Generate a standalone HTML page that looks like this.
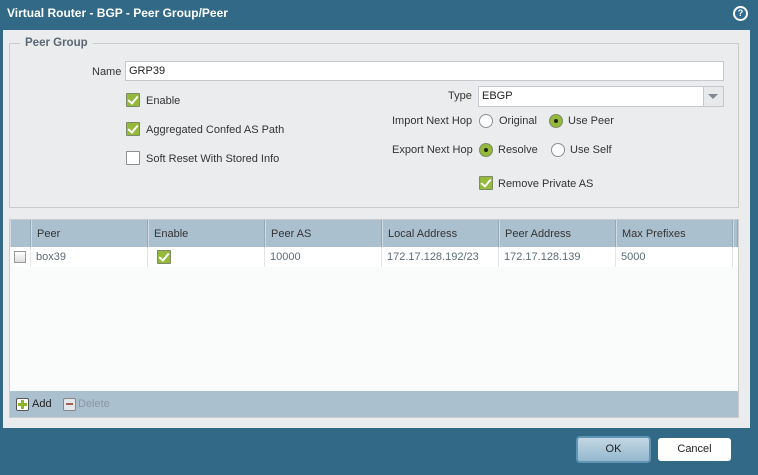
<!DOCTYPE html>
<html><head><meta charset="utf-8"><style>
*{box-sizing:border-box;margin:0;padding:0}
body{width:758px;height:475px;background:#316987;font-family:"Liberation Sans",Tahoma,sans-serif;font-size:11px;color:#333;position:relative;overflow:hidden}
.a{position:absolute}
.title{left:7px;top:6px;color:#fff;font-weight:bold;font-size:12px}
.help{left:733px;top:6px;width:15px;height:15px;border-radius:50%;background:#fff;border:2px solid #fff;}
.help div{width:11px;height:11px;border-radius:50%;background:#2f6d93;color:#fff;font-size:9px;font-weight:bold;text-align:center;line-height:11px}
.panel{left:3px;top:30px;width:747px;height:398px;background:#ebecee}
.fs{left:9px;top:43px;width:730px;height:165px;border:1px solid #c9cbcd}
.legend{left:20px;top:37px;background:#ebecee;padding:0 5px;color:#5b6773;font-weight:bold;font-size:11.5px}
.inp{background:#fff;border:1px solid #c5c8cc;padding-left:3px;line-height:18px;color:#222}
.cb{width:14px;height:14px;border:1px solid #8b8f94;background:#fff;border-radius:1px}
.cb.on{background:#95b93a;border-color:#7c8b66}
.cb.on::after{content:"";position:absolute;left:3px;top:0px;width:4px;height:8px;border:solid #fff;border-width:0 2px 2px 0;transform:rotate(40deg)}
.rb{width:14px;height:14px;border-radius:50%;border:1px solid #8b8f94;background:#fff}
.rb.on{background:#95b93a;border-color:#7c8b66}
.rb.on::after{content:"";position:absolute;left:4px;top:4px;width:4px;height:4px;border-radius:50%;background:#222}
.th{top:220px;height:27px;background:#abc0cf;border-right:1px solid #93a8b8;border-left:1px solid #d0dbe4;line-height:25px;padding-top:2px;padding-left:5px;color:#333}
.td{top:247px;height:20px;line-height:20px;padding-left:5px;color:#5c6b78;border-right:1px solid #e3e6e9}
</style></head><body>
<div class="a title">Virtual Router - BGP - Peer Group/Peer</div>
<div class="a help"><div>?</div></div>
<div class="a panel"></div>
<div class="a fs"></div>
<div class="a legend">Peer Group</div>
<div class="a" style="left:92px;top:66px">Name</div>
<div class="a inp" style="left:125px;top:61px;width:599px;height:20px">GRP39</div>
<div class="a cb on" style="left:126px;top:93px"></div><div class="a" style="left:146px;top:95px">Enable</div>
<div class="a cb on" style="left:126px;top:122px"></div><div class="a" style="left:146px;top:124px">Aggregated Confed AS Path</div>
<div class="a cb" style="left:126px;top:151px"></div><div class="a" style="left:146px;top:153px">Soft Reset With Stored Info</div>
<div class="a" style="left:448px;top:90px">Type</div>
<div class="a inp" style="left:478px;top:86px;width:246px;height:21px">EBGP</div>
<div class="a" style="left:703px;top:87px;width:20px;height:19px;background:#e8e9ea;border-left:1px solid #c5c8cc"></div>
<div class="a" style="left:708px;top:94px;border-left:5px solid transparent;border-right:5px solid transparent;border-top:5px solid #7f8a95"></div>
<div class="a" style="left:392px;top:115px">Import Next Hop</div>
<div class="a rb" style="left:479px;top:114px"></div><div class="a" style="left:499px;top:115px">Original</div>
<div class="a rb on" style="left:549px;top:114px"></div><div class="a" style="left:568px;top:115px">Use Peer</div>
<div class="a" style="left:392px;top:144px">Export Next Hop</div>
<div class="a rb on" style="left:479px;top:143px"></div><div class="a" style="left:498px;top:144px">Resolve</div>
<div class="a rb" style="left:551px;top:143px"></div><div class="a" style="left:570px;top:144px">Use Self</div>
<div class="a cb on" style="left:479px;top:176px"></div><div class="a" style="left:498px;top:178px">Remove Private AS</div>
<div class="a" style="left:9px;top:219px;width:730px;height:199px;background:#fafbfb;border:1px solid #c9cbcd"></div>
<div class="a th" style="left:10px;width:21px"></div>
<div class="a th" style="left:31px;width:117px">Peer</div>
<div class="a th" style="left:148px;width:117px">Enable</div>
<div class="a th" style="left:265px;width:117px">Peer AS</div>
<div class="a th" style="left:382px;width:117px">Local Address</div>
<div class="a th" style="left:499px;width:117px">Peer Address</div>
<div class="a th" style="left:616px;width:117px">Max Prefixes</div>
<div class="a th" style="left:733px;width:5px;padding:0"></div>
<div class="a" style="left:10px;top:247px;width:728px;height:20px;background:#fff"></div>
<div class="a td" style="left:10px;width:21px"></div>
<div class="a" style="left:14px;top:251px;width:12px;height:12px;border:1px solid #999;background:linear-gradient(#fff,#ddd)"></div>
<div class="a td" style="left:31px;width:117px">box39</div>
<div class="a td" style="left:148px;width:117px"></div>
<div class="a cb on" style="left:157px;top:250px"></div>
<div class="a td" style="left:265px;width:117px">10000</div>
<div class="a td" style="left:382px;width:117px">172.17.128.192/23</div>
<div class="a td" style="left:499px;width:117px">172.17.128.139</div>
<div class="a td" style="left:616px;width:117px">5000</div>
<div class="a" style="left:10px;top:391px;width:728px;height:26px;background:#abc0cf"></div>
<div class="a" style="left:16px;top:398px;width:13px;height:13px;border:1px solid #555;border-radius:2px;background:#fff"></div>
<div class="a" style="left:18px;top:403px;width:9px;height:3px;background:#8db52a"></div>
<div class="a" style="left:21px;top:400px;width:3px;height:9px;background:#8db52a"></div>
<div class="a" style="left:32px;top:398px;color:#222">Add</div>
<div class="a" style="left:63px;top:398px;width:13px;height:13px;border:1px solid #888;border-radius:2px;background:#e4e8ec"></div>
<div class="a" style="left:66px;top:403px;width:7px;height:2px;background:#a56050"></div>
<div class="a" style="left:78px;top:398px;color:#8a96a0">Delete</div>
<div class="a" style="left:576px;top:436px;width:75px;height:27px;border-radius:4px;border:2px solid #5f95b5;background:linear-gradient(#c3d7e3,#94b8ce);text-align:center;line-height:23px;color:#222">OK</div>
<div class="a" style="left:658px;top:438px;width:73px;height:23px;border-radius:3px;background:#fff;text-align:center;line-height:23px;color:#222">Cancel</div>
</body></html>
